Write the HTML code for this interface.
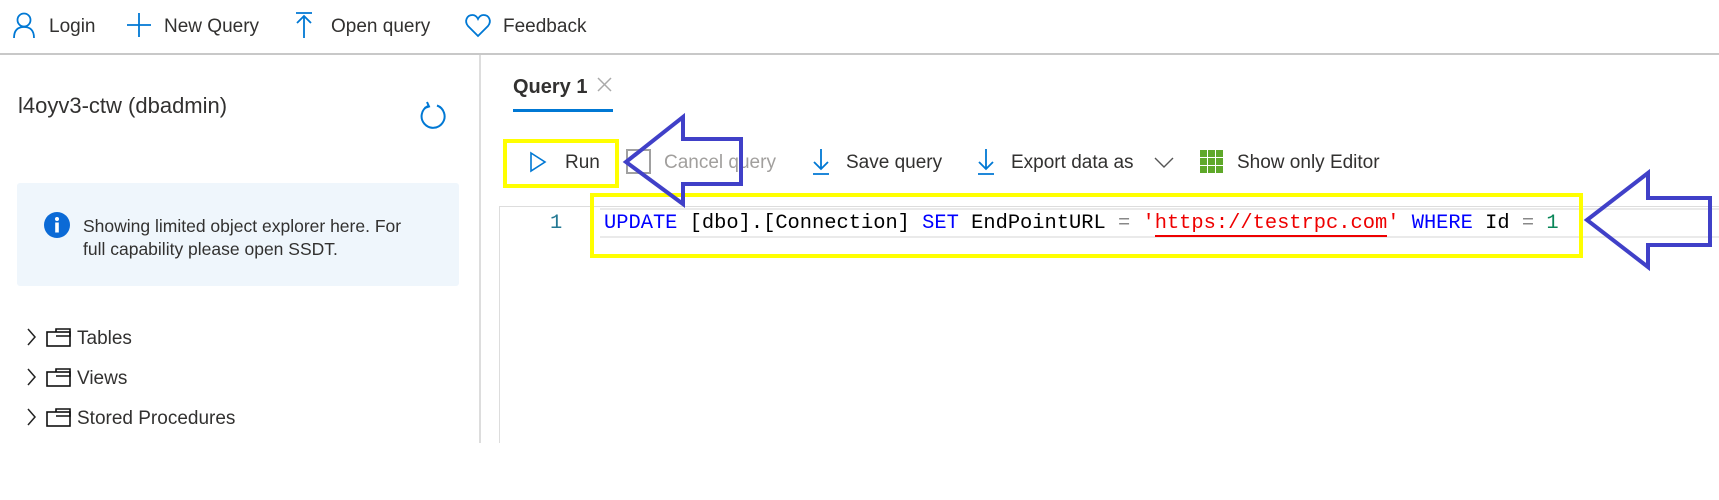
<!DOCTYPE html>
<html><head><meta charset="utf-8"><style>
*{margin:0;padding:0;box-sizing:border-box}
body{width:1719px;height:500px;background:#fff;position:relative;overflow:hidden;font-family:"Liberation Sans",sans-serif;color:#323130}
.a{position:absolute;white-space:nowrap}
.t{font-size:19px;line-height:24px}
svg{position:absolute;overflow:visible}
.code{font-family:"Liberation Mono",monospace;font-size:20.4px;line-height:24px}
</style></head><body>
<!-- top toolbar -->
<svg style="left:12px;top:12px" width="24" height="26" viewBox="0 0 24 26"><circle cx="12" cy="8" r="6.5" fill="none" stroke="#0078d4" stroke-width="1.8"/><path d="M2 26 C2 18 6 15 12 15 C18 15 22 18 22 26" fill="none" stroke="#0078d4" stroke-width="1.8"/></svg>
<div class="a t" style="left:49px;top:15px">Login</div>
<svg style="left:127px;top:13px" width="24" height="24"><path d="M12 0V24M0 12H24" stroke="#0078d4" stroke-width="1.8"/></svg>
<div class="a t" style="left:164px;top:15px">New Query</div>
<svg style="left:296px;top:12px" width="16" height="26"><path d="M0 1H16M8 4V26M1 11L8 4L15 11" fill="none" stroke="#0078d4" stroke-width="1.8"/></svg>
<div class="a t" style="left:331px;top:15px">Open query</div>
<svg style="left:465px;top:14px" width="26" height="24"><path d="M13 22 L3 12 C-1 7 2 1 7.5 1 C10 1 12 3 13 5 C14 3 16 1 18.5 1 C24 1 27 7 23 12 Z" fill="none" stroke="#0078d4" stroke-width="1.8"/></svg>
<div class="a t" style="left:503px;top:15px">Feedback</div>
<div class="a" style="left:0;top:53px;width:1719px;height:2px;background:#c8c8c8"></div>
<!-- left panel -->
<div class="a" style="left:479px;top:55px;width:2px;height:388px;background:#ddd"></div>
<div class="a" style="left:18px;top:93px;font-size:22px;line-height:26px">l4oyv3-ctw (dbadmin)</div>
<svg style="left:420px;top:103px" width="26" height="26"><path d="M8 3 A11.5 11.5 0 1 0 17 2.5" fill="none" stroke="#0078d4" stroke-width="2"/><path d="M7 -1 L9 3.5 L4.5 5" fill="none" stroke="#0078d4" stroke-width="2"/></svg>
<div class="a" style="left:17px;top:183px;width:442px;height:103px;background:#eff6fc;border-radius:3px"></div>
<svg style="left:44px;top:212px" width="26" height="26"><circle cx="13" cy="13" r="13" fill="#0b6ad6"/><circle cx="13" cy="7" r="2" fill="#fff"/><rect x="11.2" y="10.5" width="3.6" height="10" fill="#fff"/></svg>
<div class="a" style="left:83px;top:215px;font-size:17.5px;line-height:23px">Showing limited object explorer here. For<br>full capability please open SSDT.</div>
<svg style="left:27px;top:329px" width="10" height="100"><path d="M1 0L8 8L1 16M1 40L8 48L1 56M1 80L8 88L1 96" fill="none" stroke="#222" stroke-width="1.5"/></svg>
<svg style="left:46px;top:328px" width="26" height="100"><g fill="none" stroke="#111" stroke-width="1.6"><rect x="1" y="4" width="23" height="14"/><path d="M10 4V1H24V8H10"/></g><g transform="translate(0,40)" fill="none" stroke="#111" stroke-width="1.6"><rect x="1" y="4" width="23" height="14"/><path d="M10 4V1H24V8H10"/></g><g transform="translate(0,80)" fill="none" stroke="#111" stroke-width="1.6"><rect x="1" y="4" width="23" height="14"/><path d="M10 4V1H24V8H10"/></g></svg>
<div class="a t" style="left:77px;top:327px">Tables</div>
<div class="a t" style="left:77px;top:367px">Views</div>
<div class="a t" style="left:77px;top:407px">Stored Procedures</div>
<!-- tabs -->
<div class="a" style="left:513px;top:74px;font-size:20px;font-weight:bold;line-height:26px">Query 1</div>
<svg style="left:597px;top:77px" width="15" height="15"><path d="M1 1L14 14M14 1L1 14" stroke="#aaa" stroke-width="1.5"/></svg>
<div class="a" style="left:513px;top:109px;width:100px;height:3px;background:#0078d4"></div>
<!-- toolbar 2 -->
<svg style="left:530px;top:152px" width="16" height="20"><path d="M1 1L15 10L1 19Z" fill="none" stroke="#0078d4" stroke-width="1.6"/></svg>
<div class="a t" style="left:565px;top:151px">Run</div>
<div class="a" style="left:626px;top:149px;width:25px;height:25px;border:2px solid #a0a0a0"></div>
<div class="a t" style="left:664px;top:151px;color:#a19f9d">Cancel query</div>
<svg style="left:813px;top:149px" width="16" height="26"><path d="M8 0V20M1 13L8 20L15 13M0 25H16" fill="none" stroke="#0078d4" stroke-width="1.8"/></svg>
<div class="a t" style="left:846px;top:151px">Save query</div>
<svg style="left:978px;top:149px" width="16" height="26"><path d="M8 0V20M1 13L8 20L15 13M0 25H16" fill="none" stroke="#0078d4" stroke-width="1.8"/></svg>
<div class="a t" style="left:1011px;top:151px">Export data as</div>
<svg style="left:1154px;top:157px" width="20" height="11"><path d="M1 1L10 10L19 1" fill="none" stroke="#555" stroke-width="1.4"/></svg>
<svg style="left:1200px;top:150px" width="23" height="23"><g fill="#5ea829"><rect x="0" y="0" width="7" height="7"/><rect x="8" y="0" width="7" height="7"/><rect x="16" y="0" width="7" height="7"/><rect x="0" y="8" width="7" height="7"/><rect x="8" y="8" width="7" height="7"/><rect x="16" y="8" width="7" height="7"/><rect x="0" y="16" width="7" height="7"/><rect x="8" y="16" width="7" height="7"/><rect x="16" y="16" width="7" height="7"/></g></svg>
<div class="a t" style="left:1237px;top:151px">Show only Editor</div>
<!-- editor -->
<div class="a" style="left:499px;top:206px;width:1220px;height:1px;background:#ddd"></div>
<div class="a" style="left:499px;top:206px;width:1px;height:237px;background:#ddd"></div>
<div class="a" style="left:600px;top:208px;width:1119px;height:30px;border-top:2px solid #eaeaea;border-bottom:2px solid #eaeaea"></div>
<div class="a code" style="left:550px;top:212px;color:#237893">1</div>
<div class="a code" style="left:604px;top:212px;color:#000"><span style="color:#0000ff">UPDATE</span> [dbo].[Connection] <span style="color:#0000ff">SET</span> EndPointURL <span style="color:#888">=</span> <span style="color:#e00">'<span style="border-bottom:2px solid #e00">https://testrpc.com</span>'</span> <span style="color:#0000ff">WHERE</span> Id <span style="color:#888">=</span> <span style="color:#098658">1</span></div>
<!-- highlights -->
<div class="a" style="left:503px;top:139px;width:116px;height:49px;border:4px solid #ffff00"></div>
<div class="a" style="left:590px;top:193px;width:993px;height:65px;border:4px solid #ffff00"></div>
<svg style="left:0;top:0" width="1719" height="500"><g fill="none" stroke="#4040c8" stroke-width="4" stroke-linejoin="miter">
<path d="M626 162 L683 117 L683 139 L741 139 L741 184 L683 184 L683 204 Z"/>
<path d="M1587 220 L1648 173 L1648 198 L1710 198 L1710 245 L1648 245 L1648 267 Z"/></g></svg>
</body></html>
